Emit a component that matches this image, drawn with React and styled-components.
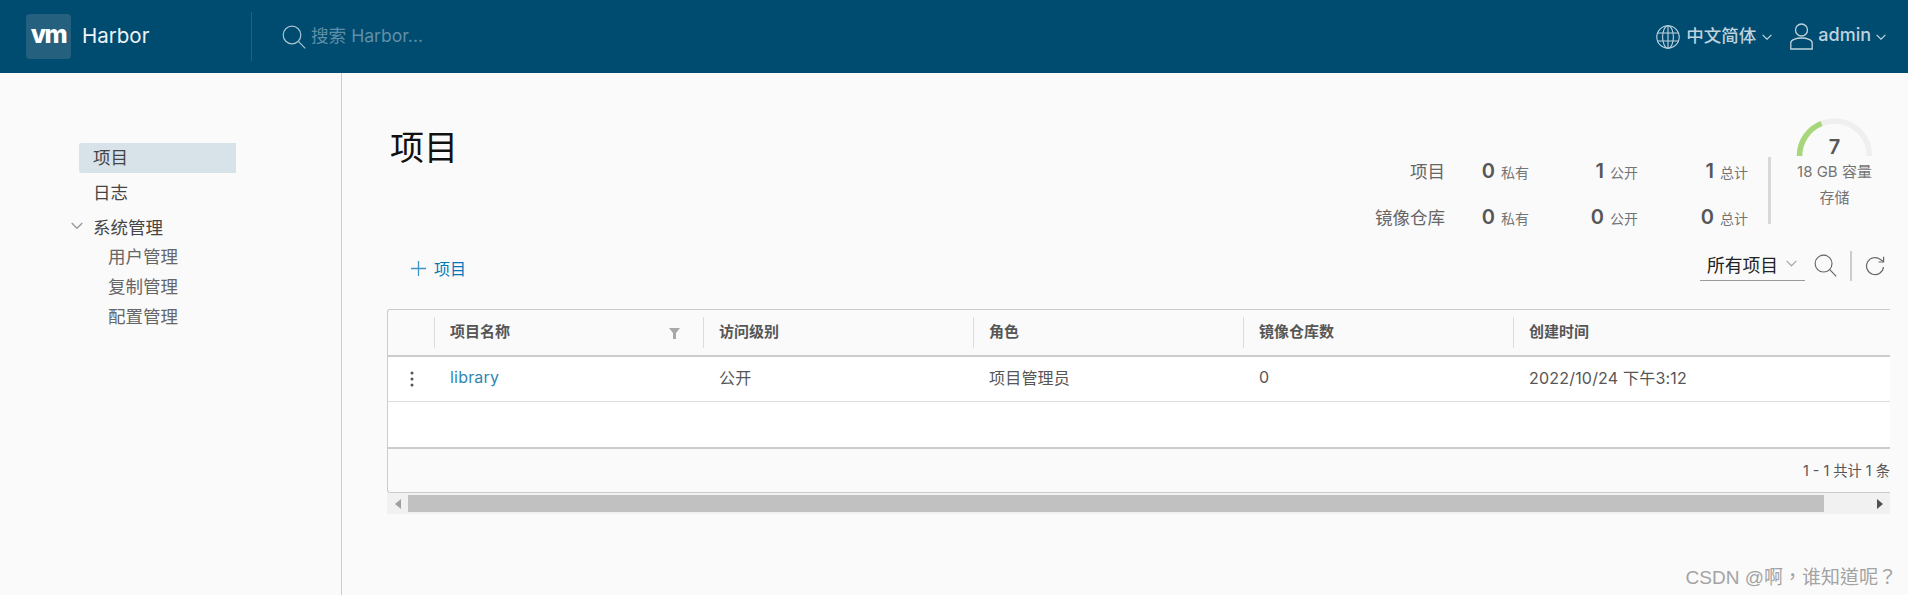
import React from "react";
import styled, { createGlobalStyle } from "styled-components";

const GlobalStyle = createGlobalStyle`
  html, body {
    margin: 0;
    padding: 0;
    background: #fafafa;
    overflow: hidden;
  }
  body {
    font-family: Inter, "Noto Sans CJK SC", sans-serif;
    color: #565656;
  }
  * {
    box-sizing: border-box;
  }
`;

const Page = styled.div`
  position: relative;
  width: 1908px;
  height: 595px;
  overflow: hidden;
`;

const TopBar = styled.header`
  height: 73px;
  background: #004c70;
  display: flex;
  align-items: center;
  padding-left: 26px;
  color: #fff;
`;

const LogoBox = styled.div`
  width: 45px;
  height: 45px;
  border-radius: 4px;
  background: #26607f;
  display: flex;
  align-items: center;
  justify-content: center;
  font-size: 25px;
  font-weight: 800;
  letter-spacing: -1.5px;
  padding-bottom: 5px;
`;

const Brand = styled.div`
  font-size: 20.5px;
  margin-left: 11px;
  width: 169px;
  color: #eef4f7;
  padding-bottom: 3px;
`;

const BarDivider = styled.div`
  width: 1px;
  height: 49px;
  background: #1f6283;
`;

const SearchBox = styled.div`
  display: flex;
  align-items: center;
  gap: 5px;
  margin-left: 30px;
  font-size: 17.6px;
  color: #5f8fa8;
  span {
    padding-bottom: 4px;
  }
`;

const BarRight = styled.div`
  margin-left: auto;
  display: flex;
  align-items: center;
  padding-right: 22px;
  color: #bfd3de;
  font-size: 17.5px;
  span {
    padding-bottom: 4px;
    font-weight: 500;
  }
`;

const BarItem = styled.div`
  display: flex;
  align-items: center;
  gap: ${(p) => p.$gap || 6}px;
  margin-right: ${(p) => p.$after || 0}px;
`;

const UserName = styled.span`
  font-size: 18px;
`;

const Body = styled.div`
  display: flex;
  height: 522px;
`;

const Sidebar = styled.nav`
  width: 342px;
  flex: none;
  border-right: 1px solid #ccc;
  padding: 70px 0 0 79px;
  font-size: 17.5px;
`;

const NavItem = styled.div`
  position: relative;
  width: 157px;
  height: 30px;
  margin-bottom: 5px;
  padding-left: 14px;
  line-height: 30px;
  border-radius: 3px 0 0 3px;
  color: #454545;
  background: ${(p) => (p.$active ? "#d8e3e9" : "transparent")};
`;

const NavChevron = styled.span`
  position: absolute;
  left: -8px;
  top: 9px;
  display: flex;
`;

const SubItem = styled.div`
  height: 30px;
  padding-left: 29px;
  line-height: 30px;
  color: #666;
  margin-top: ${(p) => (p.$first ? -6 : 0)}px;
`;

const Main = styled.main`
  flex: 1;
  min-width: 0;
  padding: 45px 18px 0 45px;
`;

const TopRow = styled.div`
  height: 131px;
  display: flex;
  justify-content: space-between;
  align-items: flex-start;
`;

const Title = styled.h1`
  margin: 9px 0 0 3px;
  font-size: 34px;
  line-height: 42px;
  font-weight: 400;
  color: #111;
`;

const Summary = styled.div`
  display: flex;
  align-items: flex-start;
  padding-right: 17px;
`;

const StatsGrid = styled.div`
  display: grid;
  grid-template-columns: auto 84px 109px 110px;
  grid-auto-rows: 46px;
  align-items: center;
  margin-top: 31px;
`;

const StatLabel = styled.div`
  font-size: 17.5px;
  line-height: 46px;
  text-align: right;
  color: #666;
`;

const StatCell = styled.div`
  display: flex;
  justify-content: flex-end;
  align-items: baseline;
  gap: 6px;
  margin-top: -3px;
  font-size: 14px;
  color: #747474;
`;

const StatNumber = styled.span`
  font-size: 20px;
  font-weight: 600;
  color: #565656;
`;

const SummaryDivider = styled.div`
  width: 3px;
  height: 67px;
  margin: 39px 25px 0 20px;
  background: #d8d8d8;
`;

const Gauge = styled.div`
  position: relative;
  width: 77px;
  margin-top: -1px;
  text-align: center;
  font-size: 15px;
  line-height: 26px;
  color: #747474;
  white-space: nowrap;
`;

const GaugeValue = styled.div`
  position: absolute;
  left: 0;
  right: 0;
  top: 17px;
  font-size: 20px;
  line-height: 26px;
  font-weight: 600;
  color: #565656;
`;

const GaugeText = styled.div`
  margin-top: ${(p) => p.$top || 0}px;
`;

const Toolbar = styled.div`
  height: 40px;
  margin-bottom: 20px;
  display: flex;
  align-items: center;
  padding-right: 5px;
`;

const AddButton = styled.div`
  display: flex;
  align-items: center;
  gap: 8px;
  margin: -2px 0 0 24px;
  font-size: 16px;
  color: #0079b8;
`;

const ToolbarRight = styled.div`
  margin: -7px 0 0 auto;
  display: flex;
  align-items: center;
`;

const SelectBox = styled.div`
  width: 105px;
  height: 30px;
  padding: 0 8px 3px 7px;
  display: flex;
  align-items: center;
  justify-content: space-between;
  margin-right: 9px;
  border-bottom: 1px solid #9a9a9a;
  font-size: 17.8px;
  color: #222;
`;

const ToolDivider = styled.div`
  width: 2px;
  height: 30px;
  background: #ccc;
  margin: 0 13px;
`;

const Table = styled.div`
  border: 1px solid #ccc;
  border-right: none;
  border-radius: 3px 0 0 3px;
  overflow: hidden;
`;

const gridColumns = "46px 269px 270px 270px 270px 1fr";

const HeadRow = styled.div`
  display: grid;
  grid-template-columns: ${gridColumns};
  height: 47px;
  border-bottom: 2px solid #ccc;
`;

const HeadCell = styled.div`
  display: flex;
  align-items: center;
  justify-content: space-between;
  margin: 7px 0 7px;
  padding: 0 23px 5px 15px;
  border-left: ${(p) => (p.$plain ? "none" : "1px solid #ddd")};
  font-size: 15px;
  font-weight: 700;
  color: #565656;
  svg {
    margin-top: 6px;
  }
`;

const DataRow = styled.div`
  display: grid;
  grid-template-columns: ${gridColumns};
  height: 45px;
  background: #fff;
  border-bottom: 1px solid #ddd;
  align-items: center;
`;

const DataCell = styled.div`
  padding: 0 0 4px 16px;
  font-size: 16px;
  letter-spacing: 0.2px;
  color: ${(p) => p.$color || "#565656"};
`;

const ActionCell = styled.div`
  display: flex;
  justify-content: center;
  padding-left: 2px;
`;

const EmptyArea = styled.div`
  height: 47px;
  background: #fff;
  border-bottom: 2px solid #ccc;
`;

const TableFooter = styled.div`
  height: 43px;
  display: flex;
  align-items: center;
  justify-content: flex-end;
  padding-bottom: 2px;
  font-size: 14.3px;
  color: #565656;
  white-space: nowrap;
`;

const ScrollBar = styled.div`
  height: 21px;
  background: #f1f1f1;
  display: flex;
  align-items: center;
`;

const ScrollArrow = styled.div`
  width: 21px;
  flex: none;
  display: flex;
  justify-content: center;
`;

const ScrollThumb = styled.div`
  width: 1416px;
  height: 17px;
  background: #c1c1c1;
`;

const ScrollEnd = styled.div`
  margin-left: auto;
  width: 21px;
  display: flex;
  justify-content: center;
`;

const Watermark = styled.div`
  position: absolute;
  right: 11px;
  bottom: 4px;
  font-size: 19px;
  line-height: 26px;
  color: #a3a3a3;
  font-family: "Liberation Sans", "Noto Sans CJK TC", sans-serif;
`;

function SearchIcon({ size = 24, color }) {
  return (
    <svg width={size} height={size} viewBox="0 0 24 24" fill="none" stroke={color} strokeWidth="1.2">
      <circle cx="10" cy="10" r="8.8" />
      <path d="M16.4 16.4 23.2 23.4" />
    </svg>
  );
}

function Chevron({ size = 10, color = "#bfd3de", width = 1.2 }) {
  return (
    <svg width={size} height={size * 0.6} viewBox="0 0 10 6" fill="none" stroke={color} strokeWidth={width}>
      <path d="M.6.8 5 5.2 9.4.8" />
    </svg>
  );
}

function GlobeIcon() {
  return (
    <svg width="24" height="24" viewBox="0 0 24 24" fill="none" stroke="#bfd3de" strokeWidth="1.1">
      <circle cx="12" cy="12" r="11.2" />
      <ellipse cx="12" cy="12" rx="5.4" ry="11.2" />
      <path d="M12 .8v22.4M1.6 8h20.8M1.6 16h20.8" />
    </svg>
  );
}

function UserIcon() {
  return (
    <svg width="23" height="27" viewBox="0 0 23 27" fill="none" stroke="#bfd3de" strokeWidth="1.3">
      <circle cx="11.5" cy="7" r="6" />
      <path d="M.8 26v-6.2c0-2.6 5-4.8 10.7-4.8s10.7 2.2 10.7 4.8V26z" />
    </svg>
  );
}

function PlusIcon() {
  return (
    <svg width="15" height="15" viewBox="0 0 15 15" stroke="#3f96c6" strokeWidth="1.3">
      <path d="M7.5 0v15M0 7.5h15" />
    </svg>
  );
}

function RefreshIcon() {
  return (
    <svg width="20" height="20" viewBox="0 0 20 20" fill="none" stroke="#666" strokeWidth="1.2">
      <path d="M18.5 11a8.5 8.5 0 1 1-3-7.4L18.5 5.6" />
      <path d="M18.6.8V6h-5" />
    </svg>
  );
}

function FilterIcon() {
  return (
    <svg width="11" height="11" viewBox="0 0 11 11" fill="#a8a8a8">
      <path d="M0 0h11L7 5v6H4V5z" />
    </svg>
  );
}

function DotsIcon() {
  return (
    <svg width="4" height="16" viewBox="0 0 4 16" fill="#565656">
      <circle cx="2" cy="2" r="1.5" />
      <circle cx="2" cy="8" r="1.5" />
      <circle cx="2" cy="14" r="1.5" />
    </svg>
  );
}

function Triangle({ dir, color }) {
  return (
    <svg width="6" height="10" viewBox="0 0 6 10" fill={color}>
      <path d={dir === "left" ? "M6 0v10L0 5z" : "M0 0v10l6-5z"} />
    </svg>
  );
}

function GaugeArc() {
  return (
    <svg width="77" height="39" viewBox="0 0 77 39" fill="none" strokeWidth="5.5">
      <path d="M3.5 39a35 35 0 0 1 70 0" stroke="#efefef" />
      <path d="M3.5 39A35 35 0 0 1 25.5 6.5" stroke="#a8d67a" />
    </svg>
  );
}

const stats = [
  { label: "项目", cells: [["0", "私有"], ["1", "公开"], ["1", "总计"]] },
  { label: "镜像仓库", cells: [["0", "私有"], ["0", "公开"], ["0", "总计"]] },
];

const columns = ["访问级别", "角色", "镜像仓库数", "创建时间"];

export default function App() {
  return (
    <Page>
      <GlobalStyle />
      <TopBar>
        <LogoBox>vm</LogoBox>
        <Brand>Harbor</Brand>
        <BarDivider />
        <SearchBox>
          <SearchIcon color="#a9c4d2" />
          <span>搜索 Harbor...</span>
        </SearchBox>
        <BarRight>
          <BarItem $after={18}>
            <GlobeIcon />
            <span>中文简体</span>
            <Chevron />
          </BarItem>
          <BarItem $gap={5}>
            <UserIcon />
            <UserName>admin</UserName>
            <Chevron />
          </BarItem>
        </BarRight>
      </TopBar>
      <Body>
        <Sidebar>
          <NavItem $active>项目</NavItem>
          <NavItem>日志</NavItem>
          <NavItem>
            <NavChevron>
              <Chevron size={12} color="#9a9a9a" />
            </NavChevron>
            系统管理
          </NavItem>
          <SubItem $first>用户管理</SubItem>
          <SubItem>复制管理</SubItem>
          <SubItem>配置管理</SubItem>
        </Sidebar>
        <Main>
          <TopRow>
            <Title>项目</Title>
            <Summary>
              <StatsGrid>
                {stats.map((row) => (
                  <React.Fragment key={row.label}>
                    <StatLabel>{row.label}</StatLabel>
                    {row.cells.map(([num, text]) => (
                      <StatCell key={text}>
                        <StatNumber>{num}</StatNumber>
                        <span>{text}</span>
                      </StatCell>
                    ))}
                  </React.Fragment>
                ))}
              </StatsGrid>
              <SummaryDivider />
              <Gauge>
                <GaugeArc />
                <GaugeValue>7</GaugeValue>
                <GaugeText $top={-5}>18 GB 容量</GaugeText>
                <GaugeText>存储</GaugeText>
              </Gauge>
            </Summary>
          </TopRow>
          <Toolbar>
            <AddButton>
              <PlusIcon />
              <span>项目</span>
            </AddButton>
            <ToolbarRight>
              <SelectBox>
                <span>所有项目</span>
                <Chevron size={11} color="#aaa" />
              </SelectBox>
              <SearchIcon size={23} color="#666" />
              <ToolDivider />
              <RefreshIcon />
            </ToolbarRight>
          </Toolbar>
          <Table>
            <HeadRow>
              <HeadCell $plain />
              <HeadCell>
                <span>项目名称</span>
                <FilterIcon />
              </HeadCell>
              {columns.map((c) => (
                <HeadCell key={c}>{c}</HeadCell>
              ))}
            </HeadRow>
            <DataRow>
              <ActionCell>
                <DotsIcon />
              </ActionCell>
              <DataCell $color="#2f86b5">library</DataCell>
              <DataCell>公开</DataCell>
              <DataCell>项目管理员</DataCell>
              <DataCell>0</DataCell>
              <DataCell>2022/10/24 下午3:12</DataCell>
            </DataRow>
            <EmptyArea />
            <TableFooter>1 - 1 共计 1 条</TableFooter>
          </Table>
          <ScrollBar>
            <ScrollArrow>
              <Triangle dir="left" color="#a0a0a0" />
            </ScrollArrow>
            <ScrollThumb />
            <ScrollEnd>
              <Triangle dir="right" color="#505050" />
            </ScrollEnd>
          </ScrollBar>
        </Main>
      </Body>
      <Watermark>CSDN @啊，谁知道呢？</Watermark>
    </Page>
  );
}
